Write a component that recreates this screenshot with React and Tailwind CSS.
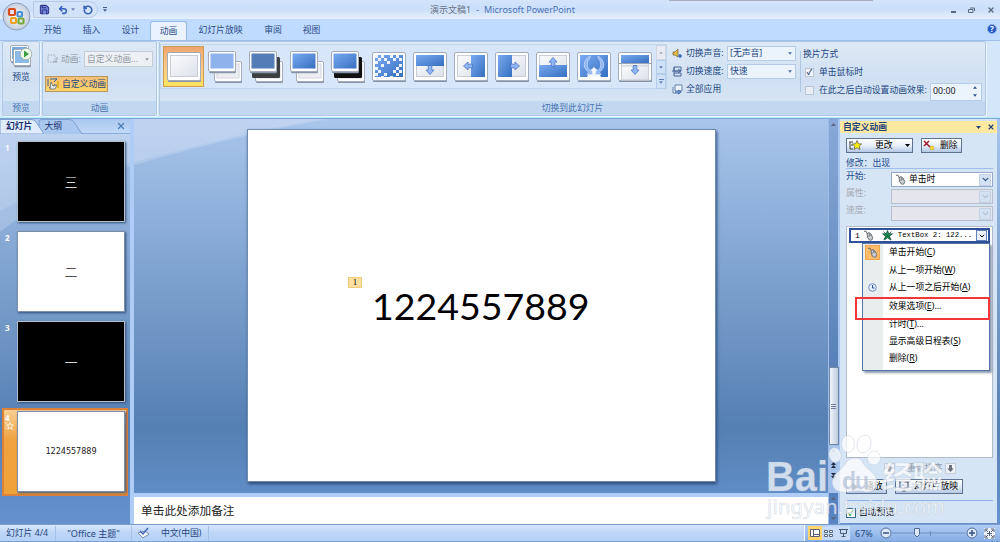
import { ChevronDown, Save, Undo2, RotateCcw, X } from "lucide-react";
import clsx from "clsx";

const tabs = [
  { label: "开始", width: "w-[39px]" },
  { label: "插入", width: "w-[39px]" },
  { label: "设计", width: "w-[39px]" },
  { label: "动画", width: "w-[37px]", active: true },
  { label: "幻灯片放映", width: "w-[67px]" },
  { label: "审阅", width: "w-[38px]" },
  { label: "视图", width: "w-[39px]" },
];

const slides = [
  { id: 1, text: "三", dark: true },
  { id: 2, text: "二" },
  { id: 3, text: "一", dark: true },
  { id: 4, text: "1224557889", selected: true },
];

const menuItems = [
  { label: "单击开始", hotkey: "C", icon: "mouse", height: "h-[17px]" },
  { label: "从上一项开始", hotkey: "W", height: "h-[18px]" },
  { label: "从上一项之后开始", hotkey: "A", icon: "clock", height: "h-[17px]" },
  { label: "效果选项", hotkey: "E", dots: true, height: "h-[20px]" },
  { label: "计时", hotkey: "T", dots: true, height: "h-[16px]" },
  { label: "显示高级日程表", hotkey: "S", height: "h-[18px]" },
  { label: "删除", hotkey: "R", height: "h-[17px]" },
];

const transitions = ["none", "fade", "fadeBlack", "cut", "cutBlack", "dissolve", "down", "left", "right", "up", "wedge", "uncover"];

const Arrow = ({ x, y, rotate }) => (
  <path
    d="M-1.8 -4.5H1.8V0H4L0 4.5L-4 0H-1.8Z"
    transform={`translate(${x} ${y}) rotate(${rotate})`}
    fill="#8fb6f7"
    stroke="#4c75c2"
    strokeWidth="0.8"
  />
);

const Frame = ({ x = 0, y = 0, w = 34, h = 29, children }) => (
  <g transform={`translate(${x} ${y})`}>
    <rect x="1" y="1.3" width={w - 1} height={h} rx="1.5" fill="#8795a9" />
    <rect x="0.5" y="0.5" width={w - 1} height={h - 1} rx="1.5" fill="#fff" stroke="#a4acb9" />
    {children}
  </g>
);

const checks = [
  [3, 3], [9, 3], [18, 3], [24, 3], [6, 6], [12, 6], [27, 6], [3, 9], [15, 9], [21, 6], [9, 12], [27, 12], [3, 15],
  [24, 15], [6, 18], [12, 21], [21, 18], [27, 18], [3, 21], [9, 24], [18, 24], [24, 21],
];

const TransitionIcon = ({ type }) => {
  const stacked = ["fade", "fadeBlack", "cut", "cutBlack"].includes(type);
  if (stacked) {
    const black = type === "fadeBlack" || type === "cutBlack";
    const blue = { fade: "#8db2ec", fadeBlack: "#547db7", cut: "url(#blue)", cutBlack: "url(#blue)" }[type];
    return (
      <svg width="34" height="32" viewBox="0 0 34 32">
        <Frame x={6} y={10} w={28} h={21}>
          <rect x="3" y="3" width="22" height="14" fill="#eceef3" stroke="#d3d6dd" />
        </Frame>
        {black && <rect x="3" y="6" width="28" height="21" rx="1.5" fill={type === "cutBlack" ? "#111" : "#3d4043"} />}
        <Frame w={28} h={21}>
          <rect x="2.5" y="2.5" width="23" height="15" fill={blue} />
        </Frame>
      </svg>
    );
  }
  return (
    <svg width="34" height="30" viewBox="0 0 34 30">
      <Frame>
        <rect x="3.5" y="3.5" width="27" height="21" fill="url(#paper)" stroke="#c9cdd6" />
        {type === "dissolve" && (
          <>
            <rect x="3" y="3" width="28" height="22" fill="url(#blue)" />
            {checks.map(([x, y]) => (
              <rect key={`${x}-${y}`} x={x} y={y} width="3" height={y > 22 ? 1 : 3} fill="#edf3fd" />
            ))}
          </>
        )}
        {type === "down" && (
          <>
            <rect x="3" y="3" width="28" height="11" fill="url(#blue)" />
            <Arrow x={17} y={18} rotate={0} />
          </>
        )}
        {type === "left" && (
          <>
            <rect x="17" y="3" width="14" height="22" fill="url(#blue)" />
            <Arrow x={14} y={14} rotate={90} />
          </>
        )}
        {type === "right" && (
          <>
            <rect x="3" y="3" width="14" height="22" fill="url(#blue)" />
            <Arrow x={20} y={14} rotate={-90} />
          </>
        )}
        {type === "up" && (
          <>
            <rect x="3" y="13" width="28" height="12" fill="url(#blue)" />
            <Arrow x={17} y={10} rotate={180} />
          </>
        )}
        {type === "wedge" && (
          <>
            <rect x="3" y="3" width="28" height="22" fill="url(#blue)" />
            <path d="M17 15L21 19L24 25H10L13 19Z" fill="#f6f8fc" />
            <g fill="#8fb6f7" stroke="#dbe8fd" strokeWidth="0.6">
              <path d="M12.500 4Q6 9 7.500 15Q8.500 18 11.500 20L10 22.500H15.500L14.500 17L13.200 18.500Q11 17 10.300 14Q9.500 9 13.500 5Z" />
              <path d="M21.500 4Q28 9 26.500 15Q25.500 18 22.500 20L24 22.500H18.500L19.500 17L20.800 18.500Q23 17 23.700 14Q24.500 9 20.500 5Z" />
            </g>
          </>
        )}
        {type === "uncover" && (
          <>
            <rect x="3" y="3" width="28" height="8" fill="url(#blue)" />
            <path d="M0 11.5H34" stroke="#9ba5b5" />
            <rect x="3.5" y="14" width="27" height="14" fill="url(#paper)" stroke="#c9cdd6" />
            <Arrow x={17} y={18} rotate={0} />
          </>
        )}
      </Frame>
    </svg>
  );
};

const MouseIcon = () => (
  <svg width="11" height="11" viewBox="0 0 11 11" className="shrink-0">
    <path d="M1 1.5L3 1L4 3.5" fill="none" stroke="#555" strokeWidth="0.8" />
    <path d="M4 3.5Q6 1.5 8 4L9.7 7.5Q9.7 10.5 7.3 10.3Q5.5 10 4.6 7.5Z" fill="#c9ccd2" stroke="#60656d" strokeWidth="0.9" />
    <path d="M4.5 6.5L8.4 5M6 3L6.8 5.5" stroke="#60656d" strokeWidth="0.6" />
  </svg>
);

const Triangle = ({ up, className }) => (
  <svg width="5" height="3" viewBox="0 0 5 3" className={clsx("shrink-0", className)}>
    <path d={up ? "M0 3H5L2.5 0Z" : "M0 0H5L2.5 3Z"} fill="currentColor" />
  </svg>
);

const TitleBar = () => (
  <header className="flex h-[19px] items-center bg-linear-to-b from-[#d3e4fb] via-[#cbdffa] to-[#e6f0fd] pr-[5px]">
    <div className="ml-[33px] flex h-[17px] w-[65px] items-center gap-[8px] rounded-r-full border border-[#b6cbe9] bg-[#d2e3f9] pl-[5px] text-[#3a63bc]">
      <Save size={11} fill="#7186dc" strokeWidth={2.3} className="text-[#35358b]" />
      <span className="flex items-center gap-[3px]">
        <Undo2 size={10} strokeWidth={3.8} />
        <Triangle className="w-[4px] text-[#6b83ae]" />
      </span>
      <RotateCcw size={10} strokeWidth={4} />
    </div>
    <div className="ml-[5px] flex flex-col items-center gap-px text-[#435a88]">
      <span className="h-px w-[4px] bg-[#435a88]" />
      <Triangle className="w-[4px]" />
    </div>
    <h1 className="ml-[323px] text-[9px] text-[#4b72b4]">
      <span className="text-[#6b7485]">演示文稿1</span>
      <span className="mx-[5px]">-</span>
      Microsoft PowerPoint
    </h1>
    <div className="ml-auto flex items-center gap-[12px] text-[#5d6b80]">
      <span className="mt-[5px] h-[2px] w-[5px] bg-[#5d6b80]" />
      <svg width="7" height="6" viewBox="0 0 7 6">
        <path d="M2 1H6.5V4M0.5 2.5H5V5.5H0.5Z" fill="none" stroke="currentColor" />
      </svg>
      <X size={8} strokeWidth={4} />
    </div>
  </header>
);

const OfficeButton = () => (
  <svg className="absolute left-[2px] top-[2px]" width="29" height="29" viewBox="0 0 29 29">
    <circle cx="14.5" cy="14.5" r="13.5" fill="url(#orb)" stroke="#8c9fba" />
    <g fill="none" strokeWidth="2.2">
      <rect x="7" y="7" width="6" height="6" rx="1" stroke="#d84b20" />
      <rect x="15.500" y="10" width="4.500" height="4.500" rx="1" stroke="#4b8ed8" />
      <rect x="9" y="16" width="5" height="5" rx="1" stroke="#f0a020" />
      <rect x="16.500" y="16.500" width="5" height="5" rx="1" stroke="#78ad3a" />
    </g>
  </svg>
);

const TabRow = () => (
  <nav className="flex h-[21px] items-end bg-[#bfdbff] pl-[33px] text-[8.8px] text-[#2c4d87]">
    {tabs.map((tab) => (
      <div
        key={tab.label}
        className={clsx(
          "flex h-[19px] items-center justify-center whitespace-nowrap",
          tab.width,
          tab.active && "rounded-t-[3px] border border-b-0 border-[#97b8e6] bg-[#e9f2fd]",
        )}
      >
        {tab.label}
      </div>
    ))}
    <div className="mb-[6px] ml-auto mr-[3px] flex size-[10px] items-center justify-center rounded-full border border-[#8ba8d7] bg-[#2157c5] text-[8px] font-bold leading-none text-white">
      ?
    </div>
  </nav>
);

const RibbonGroup = ({ label, className, children }) => (
  <section
    className={clsx(
      "flex h-[75px] flex-col overflow-hidden rounded-[2px] border border-[#b0c8e3] bg-linear-to-b from-[#dde9f6] via-[#d0e0f2] to-[#d9e7f6] shadow-[1px_1px_0_#edf6ff]",
      className,
    )}
  >
    <div className="flex min-h-0 flex-1">{children}</div>
    <div className="flex h-[14px] shrink-0 items-center justify-center bg-[#c1d8f0] text-[#4a74b2]">{label}</div>
  </section>
);

const RibbonSelect = ({ value, className }) => (
  <div className={clsx("flex h-[15px] items-center justify-between border border-[#b4cbea] bg-[#ebf3fd] pl-[2px] pr-[3px]", className)}>
    {value}
    <Triangle className="w-[4px] text-[#5174ad]" />
  </div>
);

const Ribbon = () => (
  <div className="flex h-[78px] gap-[2px] border-y border-t-[#9dbfe9] border-b-[#b5eef8] bg-[#d3e6fa] pl-[2px] text-[8.8px] text-[#23477f]">
    <RibbonGroup label="预览" className="w-[38px]">
      <div className="flex w-full flex-col items-center gap-[5px] pt-[3px]">
        <svg width="23" height="23" viewBox="0 0 23 23">
          <Frame w={19} h={17}>
            <rect x="2" y="2" width="15" height="12" fill="#76a8dc" />
          </Frame>
          <Frame x={3} y={4} w={18} h={17}>
            <rect x="2" y="2" width="14" height="12" fill="#8cbae6" />
          </Frame>
          <circle cx="16" cy="9" r="5.8" fill="#eef7ec" stroke="#a5b4ae" />
          <path d="M14 5.5L19 9L14 12.5Z" fill="#37a03c" />
        </svg>
        <span>预览</span>
      </div>
    </RibbonGroup>

    <RibbonGroup label="动画" className="w-[115px]">
      <div className="flex w-full flex-col gap-[9px] pl-[2px] pt-[9px]">
        <div className="flex h-[16px] items-center text-[#9299a4]">
          <svg width="12" height="10" viewBox="0 0 12 10" className="ml-[2px] mr-[2px]">
            <path d="M1 1H8V8H1Z" fill="none" stroke="#a7afba" strokeDasharray="1.5 1" />
            <path d="M6 8H10L8.5 6M10 3V6" fill="none" stroke="#9aa3af" />
          </svg>
          <span className="w-[23px] whitespace-nowrap">动画:</span>
          <div className="flex h-[16px] w-[69px] items-center justify-between border border-[#c6ccd6] bg-[#edf0f4] pl-[2px] pr-[3px]">
            自定义动画...
            <Triangle className="w-[4px]" />
          </div>
        </div>
        <button className="flex h-[16px] w-[63px] items-center gap-[2px] whitespace-nowrap border border-[#b89860] bg-linear-to-b from-[#f6bf77] to-[#ffd566] pl-px">
          <svg width="13" height="12" viewBox="0 0 13 12">
            <path d="M1 1V8M3 1H9M7 -1L10 1L7 4M2 9L5 11L8 6" stroke="#3664a6" fill="none" />
            <path d="M4 4L6 8L10 7L8 11H3Z" fill="#e4e9ef" stroke="#59616e" strokeWidth="0.7" />
            <path d="M11 3V10" stroke="#e3b424" strokeWidth="2" />
          </svg>
          自定义动画
        </button>
      </div>
    </RibbonGroup>

    <RibbonGroup label="切换到此幻灯片" className="w-[827px]">
      <div className="mt-[2px] flex h-[45px] w-[507px] shrink-0 items-start border border-[#c1d7ef] bg-[#d7e6f8] pl-[2px] pt-px">
        {transitions.map((type) => (
          <div
            key={type}
            className={clsx(
              "flex h-[41px] w-[41px] shrink-0 items-center justify-center border",
              type === "none"
                ? "border-[#cf9b52] bg-linear-to-b from-[#efa56b] via-[#fac98a] to-[#ffe35c]"
                : "border-transparent",
            )}
          >
            <TransitionIcon type={type} />
          </div>
        ))}
        <div className="-mt-px ml-px flex h-[44px] w-[10px] shrink-0 flex-col text-[#6281b3]">
          <span className="flex flex-1 items-center justify-center border border-[#cdd6e2] bg-[#e8ecf2] text-[#a8b0bc]">
            <Triangle up className="w-[4px]" />
          </span>
          <span className="flex flex-1 items-center justify-center border border-[#b4cdea] bg-[#cfe1f7]">
            <Triangle className="w-[4px]" />
          </span>
          <span className="flex flex-1 flex-col items-center justify-center gap-px border border-[#b4cdea] bg-[#cfe1f7]">
            <i className="h-px w-[5px] bg-[#6281b3]" />
            <Triangle className="w-[4px]" />
          </span>
        </div>
      </div>

      <div className="ml-[5px] flex w-[125px] shrink-0 flex-col gap-[3px] pt-[4px]">
        <div className="flex h-[15px] items-center">
          <svg width="11" height="11" viewBox="0 0 11 11" className="mr-[3px]">
            <path d="M1 4H3L6 1V9L3 7H1Z" fill="#e7bb3c" stroke="#806d48" strokeWidth="0.8" />
            <path d="M6 8H10M8 6V10" stroke="#3968b5" strokeWidth="1.5" />
          </svg>
          <span className="w-[41px] whitespace-nowrap">切换声音:</span>
          <RibbonSelect value="[无声音]" className="w-[69px]" />
        </div>
        <div className="flex h-[15px] items-center">
          <svg width="11" height="11" viewBox="0 0 11 11" className="mr-[3px]">
            <path d="M2 1H9V5H2ZM2 7H9V10H2M0 5H8M6 3L9 5L6 7M2 1V10" fill="none" stroke="#4b6797" />
          </svg>
          <span className="w-[41px] whitespace-nowrap">切换速度:</span>
          <RibbonSelect value="快速" className="w-[69px]" />
        </div>
        <div className="flex h-[15px] items-center gap-[3px]">
          <svg width="11" height="11" viewBox="0 0 11 11">
            <path d="M3 1H10V7H3ZM1 3V9H8" fill="#eef4fc" stroke="#6080ad" />
            <path d="M3 8H7M6 6L9 8L6 10" fill="none" stroke="#2d5ba4" />
          </svg>
          全部应用
        </div>
      </div>

      <div className="ml-[3px] mt-[9px] flex h-[41px] w-[182px] shrink-0 flex-col border-l border-[#adc6e4] pl-[2px]">
        <div className="-mt-[6px] flex h-[18px] shrink-0 items-center">换片方式</div>
        <div className="flex h-[18px] shrink-0 items-center gap-[5px] pl-[2px]">
          <span className="flex size-[9px] items-center justify-center border border-[#b9c5d5] bg-[#f2f5fa] text-[8px] font-bold leading-none text-[#344f7b]">
            ✓
          </span>
          单击鼠标时
        </div>
        <div className="flex h-[18px] shrink-0 items-center whitespace-nowrap pl-[2px]">
          <span className="mr-[5px] size-[9px] shrink-0 border border-[#b9c5d5] bg-[#e9eef5]" />
          <span className="w-[111px] shrink-0">在此之后自动设置动画效果:</span>
          <div className="mt-[3px] flex h-[18px] w-[52px] shrink-0 items-center justify-between border border-[#b4cbea] bg-[#ebf3fd] pl-[2px] pr-[4px] text-[8.8px] text-[#222]">
            00:00
            <span className="flex flex-col gap-[5px] text-[#2f538b]">
              <Triangle up className="w-[4px]" />
              <Triangle className="w-[4px]" />
            </span>
          </div>
        </div>
      </div>
    </RibbonGroup>
  </div>
);

const SlidePanel = () => (
  <aside className="flex w-[130px] shrink-0 flex-col text-[8.8px]">
    <div className="flex h-[15px] items-center border-b border-[#8caedb] bg-linear-to-b from-[#a9c7ef] to-[#c2d9f7] pr-[4px] text-[#1b2f70]">
      <div className="relative flex h-full w-[82px] items-center">
        <svg className="absolute inset-0" width="84" height="15" viewBox="0 0 84 15">
          <path d="M39 15V3Q39 0.500 42 0.500H69Q72 0.500 74 3L82 15" fill="#a9c7ef" stroke="#7fa0d0" />
          <path d="M0 0.500H31Q34 0.500 36 3L44 15H0Z" fill="#e0ecfc" stroke="#7fa0d0" />
        </svg>
        <span className="relative ml-[6px] font-bold">幻灯片</span>
        <span className="relative ml-[12px]">大纲</span>
      </div>
      <X size={10} strokeWidth={3} className="ml-auto text-[#4b7db5]" />
    </div>
    <div className="flex flex-col gap-[2px] pl-[2px] pt-[4px]">
      {slides.map((slide) => (
        <div
          key={slide.id}
          className={clsx(
            "flex h-[88px] w-[126px] border-2 pt-px",
            slide.selected
              ? "border-[#dd8139] bg-linear-to-b from-[#f9cf92] from-0% via-[#f0a33e] via-35% to-[#f0a33a]"
              : "border-transparent",
          )}
        >
          <div className="flex w-[13px] shrink-0 flex-col pl-px pt-[2px] text-[8px] font-bold leading-[9px] text-white">
            {slide.id}
            {slide.selected && (
              <svg width="9" height="8" viewBox="0 0 9 8">
                <path d="M5 0.500L6 3H8.500L6.500 4.600L7.200 7.300L5 5.700L2.800 7.300L3.500 4.600L1.500 3H4Z M0 1H2M0 6H1.500" fill="none" stroke="#fff" strokeWidth="0.800" />
              </svg>
            )}
          </div>
          <div
            className={clsx(
              "flex h-[81px] w-[108px] shrink-0 items-center justify-center border shadow-[1px_1px_2px_#33507c]",
              slide.dark ? "border-[#b9bfc8] bg-black text-white" : "border-[#7d8ea9] bg-white text-[#222]",
              slide.selected ? "font-['DejaVu_Sans_Mono',monospace] text-[8.500px]" : "font-['Noto_Sans_CJK_SC',sans-serif] text-[13px] font-light",
            )}
          >
            {slide.text}
          </div>
        </div>
      ))}
    </div>
  </aside>
);

const Editor = () => (
  <div className="flex w-[698px] shrink-0 flex-col border-l-4 border-[#aeccf5]">
    <div className="flex h-[374px] shrink-0 pl-[113px] pt-[10px]">
      <div className="flex h-[353px] w-[469px] border border-[#6f8caf] bg-white pl-[100px] pt-[147px] shadow-[1px_2px_3px_#2d4c7b]">
        <span className="flex h-[11px] w-[14px] items-center justify-center border border-[#f2ca7c] bg-[#ffe0a0] font-['Liberation_Serif',serif] text-[9px] leading-none text-black">
          1
        </span>
        <p className="ml-[10px] mt-[3px] font-[Lato,sans-serif] text-[37.500px] leading-[52px] text-black">1224557889</p>
      </div>
    </div>
    <div className="h-[4px] bg-[#aeccf5]" />
    <div className="flex flex-1 items-center bg-white pl-[7px] text-[11.700px] text-[#222]">单击此处添加备注</div>
  </div>
);

const ScrollColumn = () => (
  <div className="flex w-[12px] shrink-0 flex-col items-center border-l border-r-2 border-l-[#9fbde8] border-r-[#a9c7ef] bg-[#3f68a8]/30 text-[#5b6780]">
    <Triangle up className="mt-[4px]" />
    <div className="mt-[241px] flex h-[78px] w-[10px] shrink-0 flex-col items-center justify-center gap-px border border-[#7085a8] bg-linear-to-r from-[#f0f4fa] to-[#bdcbe0]">
      <i className="h-px w-[5px] bg-[#71829e]" />
      <i className="h-px w-[5px] bg-[#71829e]" />
      <i className="h-px w-[5px] bg-[#71829e]" />
    </div>
    <div className="flex h-[48px] w-full shrink-0 flex-col items-center bg-[#a5c2ec] pt-[5px] text-[#222b3d]">
      <Triangle className="text-[#8395b2]" />
      <Triangle up className="mt-[9px]" />
      <Triangle up />
      <Triangle className="mt-[5px]" />
      <Triangle />
    </div>
    <div className="flex w-full flex-1 flex-col items-center justify-between py-[4px]">
      <Triangle up />
      <Triangle />
    </div>
  </div>
);

const PaneButton = ({ children, className }) => (
  <button
    className={clsx(
      "flex h-[15px] items-center whitespace-nowrap border border-[#5d7290] bg-linear-to-b from-white via-[#e8eff9] to-[#b4c8e6] text-black",
      className,
    )}
  >
    {children}
  </button>
);

const PaneField = ({ label, disabled, children }) => (
  <div className={clsx("flex h-[17px] items-start justify-between", disabled ? "text-[#a6acb7]" : "text-[#244c8b]")}>
    <span>{label}:</span>
    <div
      className={clsx(
        "flex h-[15px] w-[102px] items-center border pl-[3px] text-black",
        disabled ? "border-[#b9bfca] bg-[#e5e5ed]" : "border-[#95a9c7] bg-white",
      )}
    >
      {children}
      <span className="ml-auto mr-px flex size-[12px] items-center justify-center border border-[#c2d1e5] bg-[#d3e1f3]">
        <ChevronDown size={9} strokeWidth={3.5} className={disabled ? "text-[#b7bfcd]" : "text-[#365b8d]"} />
      </span>
    </div>
  </div>
);

const ContextMenu = () => (
  <ul className="absolute left-[15px] top-[16px] z-10 h-[128px] w-[128px] border border-[#5474aa] bg-linear-to-r from-[#e8eeee] from-[20px] to-white to-[20px] text-[8.800px] text-black shadow-[2px_2px_2px_#8d9bb0]">
    {menuItems.map((item) => (
      <li key={item.label} className={clsx("flex items-center whitespace-nowrap", item.height)}>
        <span
          className={clsx(
            "ml-[2px] mr-[9px] flex size-[15px] shrink-0 items-center justify-center",
            item.icon === "mouse" && "border border-[#f0a450] bg-[#ffbd6c]",
          )}
        >
          {item.icon === "mouse" && <MouseIcon />}
          {item.icon === "clock" && (
            <svg width="9" height="9" viewBox="0 0 9 9">
              <circle cx="4.5" cy="4.5" r="3.8" fill="#e4ecfb" stroke="#7491ce" />
              <path d="M4.5 2V5H6.5" fill="none" stroke="#2e4e9c" />
            </svg>
          )}
        </span>
        {item.label}(<u>{item.hotkey}</u>){item.dots && "..."}
      </li>
    ))}
    <li className="absolute -left-[8px] top-[53px] h-[23px] w-[135px] border-2 border-[#f33737]" />
  </ul>
);

const TaskPane = () => (
  <aside className="flex h-[404px] w-[157px] shrink-0 flex-col bg-[#d6e5f5] text-[8.800px]">
    <div className="mt-[2px] flex h-[12px] items-center bg-[#ffe8a0] pl-[3px] pr-[2px] font-bold text-[#22447d]">
      自定义动画
      <Triangle className="ml-auto mr-[6px]" />
      <X size={8} strokeWidth={3.5} />
    </div>
    <div className="flex min-h-0 flex-1 flex-col pl-[6px] pr-[4px] pt-[5px]">
      <div className="flex gap-[8px]">
        <PaneButton className="w-[67px] pl-[2px] pr-[2px]">
          <svg width="13" height="11" viewBox="0 0 13 11">
            <path d="M0 2H4M1 2V9H4M2 5H4" fill="none" stroke="#444" />
            <path d="M8 0.5L9.4 3.8L12.7 4L10.2 6.2L11 9.6L8 7.8L5 9.6L5.8 6.2L3.3 4L6.6 3.8Z" fill="#fff200" stroke="#555" strokeWidth="0.7" />
          </svg>
          <span className="ml-[13px]">更改</span>
          <Triangle className="ml-auto" />
        </PaneButton>
        <PaneButton className="w-[41px] gap-[5px] pl-px">
          <svg width="12" height="11" viewBox="0 0 12 11">
            <path d="M1 1L7 7M6 1L1 6" stroke="#a5162a" strokeWidth="1.5" />
            <circle cx="9" cy="8" r="2" fill="#ffe22c" stroke="#b28c1b" strokeWidth="0.5" />
          </svg>
          删除
        </PaneButton>
      </div>
      <div className="mt-[5px] flex h-[11px] items-center border-b border-[#9dbfe9] text-[#244c8b]">修改：出现</div>
      <div className="mt-[3px]">
        <PaneField label="开始">
          <MouseIcon />
          <span className="ml-[3px]">单击时</span>
        </PaneField>
        <PaneField label="属性" disabled />
        <PaneField label="速度" disabled />
      </div>
      <div className="relative mt-[3px] h-[232px] shrink-0 border border-[#b1bccb] bg-white pl-[2px] pt-px">
        <div className="flex h-[15px] w-[141px] items-center border-2 border-[#2f519c] pl-[4px] font-['Liberation_Mono',monospace] text-[7.300px] text-black">
          <span className="mr-[3px] text-[8px]">1</span>
          <MouseIcon />
          <svg width="11" height="11" viewBox="-5.5 -5.5 11 11" className="ml-[8px] mr-[5px] shrink-0">
            <path d="M0 -5L1.300 -1.700L5 -1.700L2.100 0.700L3.200 4.500L0 2.300L-3.200 4.500L-2.100 0.700L-5 -1.700L-1.300 -1.700Z" fill="#159453" stroke="#124c35" strokeWidth="0.700" />
            <path d="M-4 -4L4 4M4 -4L-4 4" stroke="#124c35" strokeWidth="0.600" />
          </svg>
          <span className="shrink-0 whitespace-pre">TextBox 2: 122...</span>
          <span className="ml-auto mr-px flex size-[11px] shrink-0 items-center justify-center border border-[#5e7eb7] bg-[#e9f1fd]">
            <ChevronDown size={8} strokeWidth={3} />
          </span>
        </div>
        <ContextMenu />
      </div>
      <div className="mt-[4px] flex h-[12px] items-center text-[#8f97a4]">
        <span className="ml-[38px] flex size-[11px] items-center justify-center border border-[#c4ccd8] bg-[#eef2f8]">
          <svg width="7" height="7" viewBox="0 0 9 10">
            <path d="M4.5 0L9 5H6.5V10H2.5V5H0Z" fill="currentColor" />
          </svg>
        </span>
        <span className="ml-[12px] w-[38px] whitespace-nowrap">重新排序</span>
        <span className="flex size-[11px] items-center justify-center border border-[#c4ccd8] bg-[#eef2f8] text-[#666d78]">
          <svg width="7" height="7" viewBox="0 0 9 10">
            <path d="M4.5 10L9 5H6.5V0H2.5V5H0Z" fill="currentColor" />
          </svg>
        </span>
      </div>
      <div className="mt-[5px] flex gap-[8px]">
        <PaneButton className="w-[41px] gap-[5px] pl-[4px]">
          <svg width="9" height="8" viewBox="0 0 9 8">
            <path d="M1 0L8 4L1 8Z" fill="#343b48" />
          </svg>
          播放
        </PaneButton>
        <PaneButton className="w-[68px] gap-[4px] pl-[2px]">
          <svg width="12" height="11" viewBox="0 0 12 11">
            <path d="M1 1H11M2 1V7H10V1M6 7V10M4 10H8" fill="none" stroke="#3c4861" />
            <path d="M4 3H6V5H4Z" fill="#3958b9" />
          </svg>
          幻灯片放映
        </PaneButton>
      </div>
      <div className="mt-[6px] h-px shrink-0 bg-[#8eb1e6]" />
      <label className="mt-[7px] flex h-[9px] items-center gap-[3px] text-black">
        <span className="flex size-[10px] items-center justify-center border border-[#366a91] bg-white text-[8px] font-bold leading-none text-[#21a121]">
          ✓
        </span>
        自动预览
      </label>
    </div>
  </aside>
);

const StatusBar = () => (
  <footer className="flex h-[18px] items-center border-b border-t border-b-[#79a0d2] border-t-[#7c9dcc] bg-linear-to-b from-[#d7e7fc] via-[#bdd5f7] to-[#b5d1f7] text-[8.800px] text-[#27487f]">
    <span className="flex h-[15px] w-[56px] items-center whitespace-nowrap border-r border-[#a4c1e8] pl-[6px]">幻灯片 4/4</span>
    <span className="flex h-[15px] w-[76px] items-center justify-center border-r border-[#a4c1e8] text-[9px]">"Office 主题"</span>
    <span className="flex h-[15px] w-[77px] items-center gap-[11px] whitespace-nowrap border-r border-[#a4c1e8] pl-[5px]">
      <svg width="13" height="12" viewBox="0 0 13 12">
        <path d="M1 6L6 11L12 7L8 4Z" fill="#f4f7fc" stroke="#778dad" />
        <path d="M3 4L6 7L11 1" fill="none" stroke="#4269b5" strokeWidth="1.5" />
      </svg>
      中文(中国)
    </span>
    <div className="ml-auto flex h-full w-[196px] items-center border-l border-white bg-linear-to-b from-[#b2cdf3] to-[#86aee5] pl-[3px]">
      <span className="flex h-[14px] w-[14px] items-center justify-center bg-[#ffd36d]">
        <svg width="10" height="8" viewBox="0 0 10 8">
          <path d="M0.5 0.5H9.5V7.5H0.5ZM3.5 0.5V7.5M3.5 5.5H9.5" fill="#fff" stroke="#5b5e72" />
        </svg>
      </span>
      <span className="flex h-[14px] items-center gap-[6px] bg-[#c6dbf7] px-[2px]">
        <svg width="9" height="7" viewBox="0 0 9 7">
          <path d="M0.5 0.5H3.5V2.5H0.5ZM5.5 0.5H8.5V2.5H5.5ZM0.5 4.5H3.5V6.5H0.5ZM5.5 4.5H8.5V6.5H5.5Z" fill="#fff" stroke="#59677f" />
        </svg>
        <svg width="9" height="8" viewBox="0 0 9 8">
          <path d="M0 0.5H9M1.5 0.5V4.5H7.5V0.5M4.5 4.5V7.5M2.5 7.5H6.5" fill="none" stroke="#4a5974" />
        </svg>
      </span>
      <span className="ml-[5px] w-[25px] text-[9px]">67%</span>
      <svg width="102" height="14" viewBox="0 0 102 14">
        <path d="M12 7H85" stroke="#6c8fc0" />
        <path d="M50.5 5V10" stroke="#6c8fc0" />
        <g fill="#dce9fb" stroke="#526d98">
          <circle cx="6" cy="7" r="5" />
          <circle cx="92" cy="7" r="5" />
          <path d="M34.5 2.5H39.5V8.5L37 11L34.5 8.5Z" />
        </g>
        <path d="M3 7H9M89 7H95M92 4V10" stroke="#38537e" strokeWidth="1.5" />
      </svg>
      <svg width="11" height="11" viewBox="0 0 11 11" className="ml-[2px]">
        <rect width="11" height="11" fill="#eef3fb" />
        <path d="M1 4V1H4M7 1H10V4M10 7V10H7M4 10H1V7" fill="none" stroke="#505f7a" />
        <path d="M2 2L4 4M9 2L7 4M9 9L7 7M2 9L4 7M5.5 3V8M3 5.5H8" fill="none" stroke="#505f7a" />
      </svg>
    </div>
  </footer>
);

const Watermark = () => (
  <svg className="pointer-events-none absolute left-[760px] top-[430px] z-20" width="190" height="94" viewBox="0 0 190 94">
    <g fill="#fff" fillOpacity="0.72" stroke="#aebdd0" strokeOpacity="0.5" strokeWidth="0.7">
      <text x="6" y="61" fontSize="42" fontWeight="bold" textLength="62" lengthAdjust="spacingAndGlyphs" fontFamily="Liberation Sans, sans-serif">
        Bai
      </text>
      <ellipse cx="75" cy="25" rx="6" ry="7.5" transform="rotate(-15 75 25)" />
      <ellipse cx="88" cy="14" rx="6.5" ry="8.5" />
      <ellipse cx="104" cy="14" rx="7" ry="9" transform="rotate(12 104 14)" />
      <ellipse cx="114" cy="28" rx="6.5" ry="7" />
      <path d="M95 28C86 28 86 36 78 42C69 49 71 61 82 62C90 63 97 59 105 62C114 63 120 56 116 48C113 41 106 39 103 33C101 29 99 28 95 28Z" />
      <text x="122" y="58" fontSize="31" fontWeight="bold" textLength="61" fontFamily="Noto Sans CJK SC, sans-serif">
        经验
      </text>
      <text x="7" y="84" fontSize="20" textLength="178" fontFamily="Noto Sans, sans-serif">
        jingyan.baidu.com
      </text>
    </g>
    <text x="82" y="59" fontSize="23" fontWeight="bold" textLength="27" fill="#b4c3d9" fillOpacity="0.75" fontFamily="Liberation Sans, sans-serif">
      du
    </text>
  </svg>
);

const Gradients = () => (
  <svg width="0" height="0" className="absolute">
    <defs>
      <linearGradient id="blue" x1="0" y1="0" x2="1" y2="1">
        <stop offset="0" stopColor="#7aaaf0" />
        <stop offset="1" stopColor="#356fc0" />
      </linearGradient>
      <linearGradient id="paper" x1="0" y1="0" x2="1" y2="1">
        <stop offset="0" stopColor="#fafbfd" />
        <stop offset="1" stopColor="#dde1ea" />
      </linearGradient>
      <radialGradient id="orb">
        <stop offset="0" stopColor="#fff" />
        <stop offset="1" stopColor="#c3cddd" />
      </radialGradient>
    </defs>
  </svg>
);

const App = () => {
  return (
    <div className="relative flex h-[542px] w-[1000px] flex-col overflow-hidden bg-[#bfdbff] font-['Noto_Sans','Noto_Sans_CJK_SC',sans-serif] leading-none">
      <Gradients />
      <TitleBar />
      <span className="absolute left-[669px] top-0 h-px w-[204px] bg-[#a9acbd]" />
      <TabRow />
      <OfficeButton />
      <Ribbon />
      <main className="relative flex h-[406px] border-t border-[#82a4d4] bg-linear-to-b from-[#a9c6ec] from-0% via-[#5580b3] via-76% to-[#6592cf]">
        <svg className="absolute left-0 top-0" width="828" height="120" viewBox="0 0 828 120">
          <path d="M0 0H330Q240 15 134 46Q60 66 0 113Z" fill="#e2edfb" fillOpacity="0.25" />
          <path d="M0 0H320Q240 14 134 43Q60 58 0 92Z" fill="#e2edfb" fillOpacity="0.2" />
        </svg>
        <div className="relative flex w-full">
          <SlidePanel />
          <Editor />
          <ScrollColumn />
          <TaskPane />
        </div>
      </main>
      <StatusBar />
      <Watermark />
    </div>
  );
};

export default App;
